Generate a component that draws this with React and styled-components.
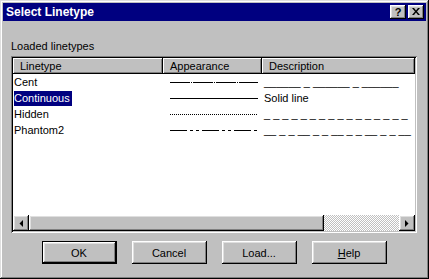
import React from "react";
import styled, { createGlobalStyle, css } from "styled-components";

const GlobalStyle = createGlobalStyle`
  html, body {
    margin: 0;
    padding: 0;
    background: #c0c0c0;
  }
  body {
    font-family: "Liberation Sans", Arial, sans-serif;
    font-size: 11px;
    color: #000;
  }
`;

const raised = css`
  box-shadow: inset -1px -1px #000, inset 1px 1px #fff, inset -2px -2px #808080,
    inset 2px 2px #dfdfdf;
`;

const Window = styled.div`
  width: 429px;
  height: 279px;
  box-sizing: border-box;
  padding: 3px;
  background: #c0c0c0;
  box-shadow: inset -1px -1px #000, inset 1px 1px #dfdfdf, inset -2px -2px #808080,
    inset 2px 2px #fff;
  display: flex;
  flex-direction: column;
`;

const TitleBar = styled.div`
  height: 18px;
  background: #000080;
  display: flex;
  align-items: center;
  gap: 2px;
  padding: 0 2px 0 3px;
`;

const Title = styled.div`
  flex: 1;
  color: #fff;
  font-weight: bold;
  font-size: 12px;
`;

const TitleButton = styled.div`
  width: 16px;
  height: 14px;
  box-sizing: border-box;
  background: #c0c0c0;
  ${raised};
  display: flex;
  align-items: center;
  justify-content: center;
  font-weight: bold;
  font-size: 11px;
  line-height: 14px;
  padding-bottom: 1px;
`;

const Body = styled.div`
  flex: 1;
  display: flex;
  flex-direction: column;
  padding: 18px 9px 12px 8px;
`;

const Label = styled.div`
  line-height: 14px;
  height: 14px;
  margin-bottom: 3px;
`;

const ListBox = styled.div`
  height: 177px;
  box-sizing: border-box;
  padding: 2px;
  background: #fff;
  box-shadow: inset 1px 1px #808080, inset -1px -1px #fff, inset 2px 2px #000,
    inset -2px -2px #c0c0c0;
  display: flex;
  flex-direction: column;
`;

const Columns = styled.div`
  display: grid;
  grid-template-columns: 150px 99px 1fr;
`;

const HeaderCell = styled.div`
  height: 16px;
  line-height: 16px;
  padding-left: 7px;
  background: #c0c0c0;
  box-shadow: inset -1px -1px #000, inset 1px 1px #fff, inset -2px -2px #808080;
  white-space: nowrap;
  overflow: hidden;
`;

const Row = styled(Columns)`
  height: 16px;
  line-height: 16px;
`;

const NameCell = styled.div`
  padding-left: 1px;
  display: flex;
  align-items: center;
`;

const Name = styled.span`
  line-height: 15px;
  padding-right: 2px;
  background: ${(p) => (p.$selected ? "#000080" : "transparent")};
  color: ${(p) => (p.$selected ? "#fff" : "#000")};
`;

const LineCell = styled.div`
  padding-left: 7px;
  display: flex;
  align-items: center;
`;

const DescCell = styled.div`
  padding-left: 2px;
  white-space: pre;
  overflow: hidden;
`;

const ScrollBar = styled.div`
  margin-top: auto;
  height: 16px;
  display: flex;
  background-color: #fff;
  background-image: conic-gradient(#c0c0c0 25%, #fff 0 50%, #c0c0c0 0 75%, #fff 0);
  background-size: 2px 2px;
`;

const ScrollButton = styled.div`
  width: 16px;
  height: 16px;
  box-sizing: border-box;
  background: #c0c0c0;
  ${raised};
  display: flex;
  align-items: center;
  justify-content: center;
`;

const Thumb = styled.div`
  width: ${(p) => p.$width}px;
  height: 16px;
  background: #c0c0c0;
  ${raised};
`;

const Track = styled.div`
  flex: 1;
`;

const ButtonRow = styled.div`
  margin-top: 8px;
  display: flex;
  justify-content: center;
  gap: 15px;
`;

const Button = styled.div`
  width: 75px;
  height: 23px;
  box-sizing: border-box;
  background: #c0c0c0;
  display: flex;
  align-items: center;
  justify-content: center;
  ${(p) =>
    p.$default
      ? css`
          box-shadow: inset 0 0 0 1px #000, inset -2px -2px #000, inset 2px 2px #fff,
            inset -3px -3px #808080, inset 3px 3px #dfdfdf;
        `
      : raised};
`;

const Arrow = ({ dir }) => (
  <svg width="4" height="7" viewBox="0 0 4 7">
    {dir === "left" ? (
      <polygon points="4,0 4,7 0.5,3.5" fill="#000" />
    ) : (
      <polygon points="0,0 0,7 3.5,3.5" fill="#000" />
    )}
  </svg>
);

const patterns = {
  Cent: "20 1 1 1",
  Continuous: "",
  Hidden: "1 1",
  Phantom2: "17 3 3 3 3 3",
};

const LineSample = ({ dash }) => (
  <svg width="88" height="16" viewBox="0 0 88 16">
    <line x1="0" y1="8.5" x2="88" y2="8.5" stroke="#000" strokeWidth="1" strokeDasharray={dash || undefined} />
  </svg>
);

const rows = [
  { name: "Cent", desc: "______ _ ______ _ ______" },
  { name: "Continuous", desc: "Solid line", selected: true },
  { name: "Hidden", desc: "_ _ _ _ _ _ _ _ _ _ _ _ _ _ _ _" },
  { name: "Phantom2", desc: "__ _ _ __ _ _ __ _ _ __ _ _ __" },
];

export default function App() {
  return (
    <>
      <GlobalStyle />
      <Window>
        <TitleBar>
          <Title>Select Linetype</Title>
          <TitleButton>?</TitleButton>
          <TitleButton>
            <svg width="8" height="7" viewBox="0 0 8 7">
              <path d="M0 0h2l2 2.5L6 0h2L5 3.5 8 7H6L4 4.5 2 7H0l3-3.5z" fill="#000" />
            </svg>
          </TitleButton>
        </TitleBar>
        <Body>
          <Label>Loaded linetypes</Label>
          <ListBox>
            <Columns>
              <HeaderCell>Linetype</HeaderCell>
              <HeaderCell>Appearance</HeaderCell>
              <HeaderCell>Description</HeaderCell>
            </Columns>
            {rows.map((r) => (
              <Row key={r.name}>
                <NameCell>
                  <Name $selected={r.selected}>{r.name}</Name>
                </NameCell>
                <LineCell>
                  <LineSample dash={patterns[r.name]} />
                </LineCell>
                <DescCell>{r.desc}</DescCell>
              </Row>
            ))}
            <ScrollBar>
              <ScrollButton>
                <Arrow dir="left" />
              </ScrollButton>
              <Thumb $width={295} />
              <Track />
              <ScrollButton>
                <Arrow dir="right" />
              </ScrollButton>
            </ScrollBar>
          </ListBox>
          <ButtonRow>
            <Button $default>OK</Button>
            <Button>Cancel</Button>
            <Button>Load...</Button>
            <Button>
              <span>
                <u>H</u>elp
              </span>
            </Button>
          </ButtonRow>
        </Body>
      </Window>
    </>
  );
}
